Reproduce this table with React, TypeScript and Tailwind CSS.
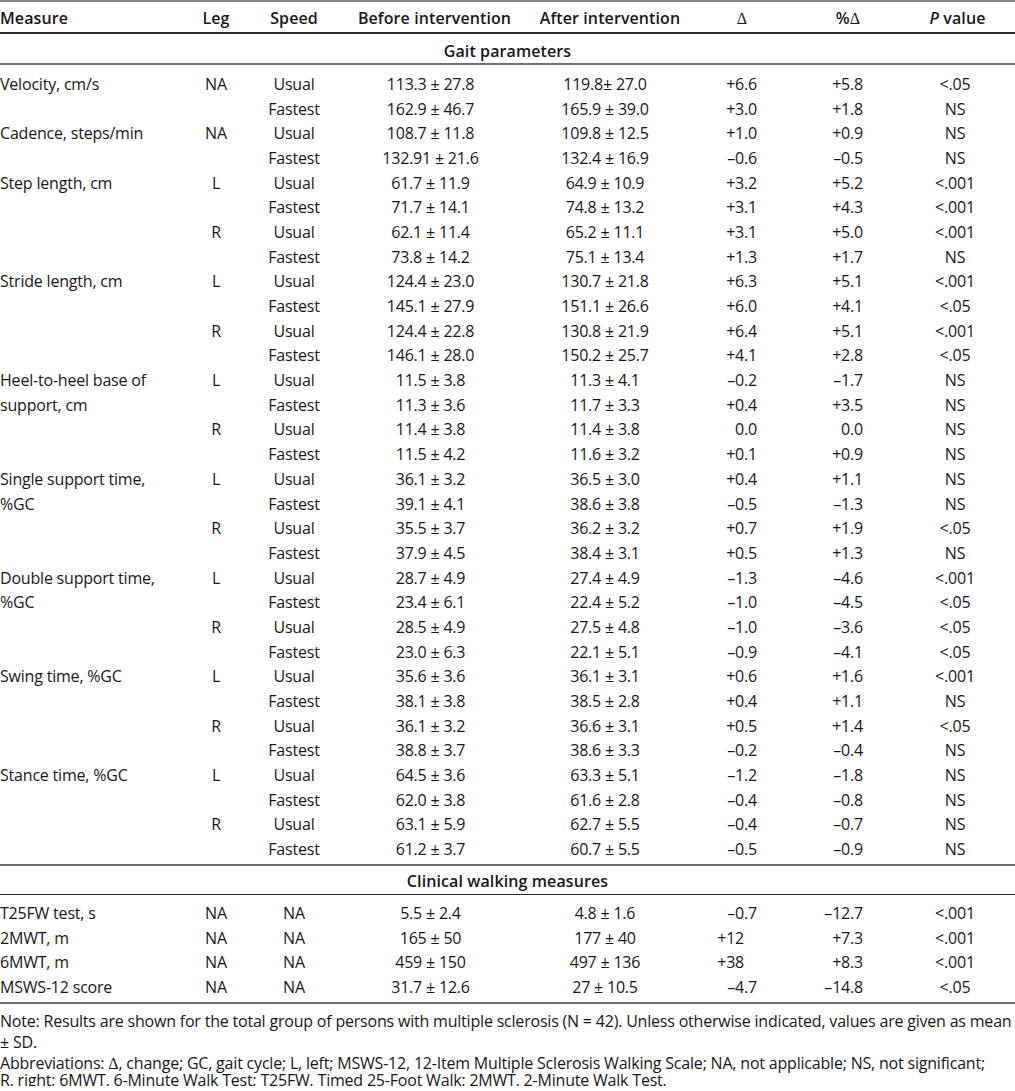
type Row = {
  label?: string
  leg?: string
  speed: string
  before: string
  after: string
  delta: string
  pct: string
  p: string
}

const GAIT: Row[] = [
  { label: 'Velocity, cm/s', leg: 'NA', speed: 'Usual', before: '113.3 ± 27.8', after: '119.8± 27.0', delta: '+6.6', pct: '+5.8', p: '<.05' },
  { speed: 'Fastest', before: '162.9 ± 46.7', after: '165.9 ± 39.0', delta: '+3.0', pct: '+1.8', p: 'NS' },
  { label: 'Cadence, steps/min', leg: 'NA', speed: 'Usual', before: '108.7 ± 11.8', after: '109.8 ± 12.5', delta: '+1.0', pct: '+0.9', p: 'NS' },
  { speed: 'Fastest', before: '132.91 ± 21.6', after: '132.4 ± 16.9', delta: '–0.6', pct: '–0.5', p: 'NS' },
  { label: 'Step length, cm', leg: 'L', speed: 'Usual', before: '61.7 ± 11.9', after: '64.9 ± 10.9', delta: '+3.2', pct: '+5.2', p: '<.001' },
  { speed: 'Fastest', before: '71.7 ± 14.1', after: '74.8 ± 13.2', delta: '+3.1', pct: '+4.3', p: '<.001' },
  { leg: 'R', speed: 'Usual', before: '62.1 ± 11.4', after: '65.2 ± 11.1', delta: '+3.1', pct: '+5.0', p: '<.001' },
  { speed: 'Fastest', before: '73.8 ± 14.2', after: '75.1 ± 13.4', delta: '+1.3', pct: '+1.7', p: 'NS' },
  { label: 'Stride length, cm', leg: 'L', speed: 'Usual', before: '124.4 ± 23.0', after: '130.7 ± 21.8', delta: '+6.3', pct: '+5.1', p: '<.001' },
  { speed: 'Fastest', before: '145.1 ± 27.9', after: '151.1 ± 26.6', delta: '+6.0', pct: '+4.1', p: '<.05' },
  { leg: 'R', speed: 'Usual', before: '124.4 ± 22.8', after: '130.8 ± 21.9', delta: '+6.4', pct: '+5.1', p: '<.001' },
  { speed: 'Fastest', before: '146.1 ± 28.0', after: '150.2 ± 25.7', delta: '+4.1', pct: '+2.8', p: '<.05' },
  { label: 'Heel-to-heel base of', leg: 'L', speed: 'Usual', before: '11.5 ± 3.8', after: '11.3 ± 4.1', delta: '–0.2', pct: '–1.7', p: 'NS' },
  { label: 'support, cm', speed: 'Fastest', before: '11.3 ± 3.6', after: '11.7 ± 3.3', delta: '+0.4', pct: '+3.5', p: 'NS' },
  { leg: 'R', speed: 'Usual', before: '11.4 ± 3.8', after: '11.4 ± 3.8', delta: '0.0', pct: '0.0', p: 'NS' },
  { speed: 'Fastest', before: '11.5 ± 4.2', after: '11.6 ± 3.2', delta: '+0.1', pct: '+0.9', p: 'NS' },
  { label: 'Single support time,', leg: 'L', speed: 'Usual', before: '36.1 ± 3.2', after: '36.5 ± 3.0', delta: '+0.4', pct: '+1.1', p: 'NS' },
  { label: '%GC', speed: 'Fastest', before: '39.1 ± 4.1', after: '38.6 ± 3.8', delta: '–0.5', pct: '–1.3', p: 'NS' },
  { leg: 'R', speed: 'Usual', before: '35.5 ± 3.7', after: '36.2 ± 3.2', delta: '+0.7', pct: '+1.9', p: '<.05' },
  { speed: 'Fastest', before: '37.9 ± 4.5', after: '38.4 ± 3.1', delta: '+0.5', pct: '+1.3', p: 'NS' },
  { label: 'Double support time,', leg: 'L', speed: 'Usual', before: '28.7 ± 4.9', after: '27.4 ± 4.9', delta: '–1.3', pct: '–4.6', p: '<.001' },
  { label: '%GC', speed: 'Fastest', before: '23.4 ± 6.1', after: '22.4 ± 5.2', delta: '–1.0', pct: '–4.5', p: '<.05' },
  { leg: 'R', speed: 'Usual', before: '28.5 ± 4.9', after: '27.5 ± 4.8', delta: '–1.0', pct: '–3.6', p: '<.05' },
  { speed: 'Fastest', before: '23.0 ± 6.3', after: '22.1 ± 5.1', delta: '–0.9', pct: '–4.1', p: '<.05' },
  { label: 'Swing time, %GC', leg: 'L', speed: 'Usual', before: '35.6 ± 3.6', after: '36.1 ± 3.1', delta: '+0.6', pct: '+1.6', p: '<.001' },
  { speed: 'Fastest', before: '38.1 ± 3.8', after: '38.5 ± 2.8', delta: '+0.4', pct: '+1.1', p: 'NS' },
  { leg: 'R', speed: 'Usual', before: '36.1 ± 3.2', after: '36.6 ± 3.1', delta: '+0.5', pct: '+1.4', p: '<.05' },
  { speed: 'Fastest', before: '38.8 ± 3.7', after: '38.6 ± 3.3', delta: '–0.2', pct: '–0.4', p: 'NS' },
  { label: 'Stance time, %GC', leg: 'L', speed: 'Usual', before: '64.5 ± 3.6', after: '63.3 ± 5.1', delta: '–1.2', pct: '–1.8', p: 'NS' },
  { speed: 'Fastest', before: '62.0 ± 3.8', after: '61.6 ± 2.8', delta: '–0.4', pct: '–0.8', p: 'NS' },
  { leg: 'R', speed: 'Usual', before: '63.1 ± 5.9', after: '62.7 ± 5.5', delta: '–0.4', pct: '–0.7', p: 'NS' },
  { speed: 'Fastest', before: '61.2 ± 3.7', after: '60.7 ± 5.5', delta: '–0.5', pct: '–0.9', p: 'NS' },
]

const CLINICAL: Row[] = [
  { label: 'T25FW test, s', leg: 'NA', speed: 'NA', before: '5.5 ± 2.4', after: '4.8 ± 1.6', delta: '–0.7', pct: '–12.7', p: '<.001' },
  { label: '2MWT, m', leg: 'NA', speed: 'NA', before: '165 ± 50', after: '177 ± 40', delta: '+12', pct: '+7.3', p: '<.001' },
  { label: '6MWT, m', leg: 'NA', speed: 'NA', before: '459 ± 150', after: '497 ± 136', delta: '+38', pct: '+8.3', p: '<.001' },
  { label: 'MSWS-12 score', leg: 'NA', speed: 'NA', before: '31.7 ± 12.6', after: '27 ± 10.5', delta: '–4.7', pct: '–14.8', p: '<.05' },
]

const COLS = 'grid grid-cols-[185px_62px_94px_179px_170px_110px_100px_115px]'

function Delta() {
  return <span className="font-['Liberation_Serif'] font-normal">Δ</span>
}

function DataRow({ r }: { r: Row }) {
  // integers get an invisible decimal so they line up on the point
  const whole = !r.delta.includes('.')
  return (
    <div className={`${COLS} h-[24.7px] items-center whitespace-nowrap`}>
      <div>{r.label ?? ''}</div>
      <div className="text-center">{r.leg ?? ''}</div>
      <div className="text-center">{r.speed}</div>
      <div className="text-center">{r.before}</div>
      <div className="text-center">{r.after}</div>
      <div className="pr-[43px] text-right">
        {r.delta}
        {whole && <span className="invisible">.0</span>}
      </div>
      <div className="pr-[37px] text-right">{r.pct}</div>
      <div className="pr-[5px] text-center">{r.p}</div>
    </div>
  )
}

export default function App() {
  return (
    <div className="w-[1015px] bg-white font-['Open_Sans'] text-[16px] leading-none tracking-[-0.2px] text-[#1a1718]">
      <div className="h-[2px] bg-[#858585]" />
      <div className={`${COLS} h-[30px] items-center pt-[2px] font-semibold tracking-[0.1px] whitespace-nowrap`}>
        <div>Measure</div>
        <div className="text-center">Leg</div>
        <div className="text-center">Speed</div>
        <div className="pl-[8px] text-center">Before intervention</div>
        <div className="pl-[10px] text-center">After intervention</div>
        <div className="pr-[6px] text-center">
          <Delta />
        </div>
        <div className="pr-[4px] text-center">
          %<Delta />
        </div>
        <div className="text-center">
          <span className="italic">P</span> value
        </div>
      </div>
      <div className="h-[1.5px] bg-[#2a2a2a]" />
      <div className="flex h-[29px] items-center justify-center pt-[5px] font-semibold tracking-[0.1px]">Gait parameters</div>
      <div className="h-[2px] bg-[#6f6f6f]" />
      <div className="pt-[7px] pb-[2.5px]">
        {GAIT.map((r, i) => (
          <DataRow key={i} r={r} />
        ))}
      </div>
      <div className="h-[2px] bg-[#6f6f6f]" />
      <div className="flex h-[27.5px] items-center justify-center pt-[3px] font-semibold tracking-[0.1px]">
        Clinical walking measures
      </div>
      <div className="h-[1.5px] bg-[#2a2a2a]" />
      <div className="pt-[5.5px] pb-[3px]">
        {CLINICAL.map((r, i) => (
          <DataRow key={i} r={r} />
        ))}
      </div>
      <div className="h-[1.5px] bg-[#6f6f6f]" />
      <div className="pt-[7px] whitespace-nowrap">
        <p className="leading-[21px]">
          Note: Results are shown for the total group of persons with multiple sclerosis (N = 42). Unless otherwise indicated, values are given as mean
          <br />± SD.
        </p>
        <p>
          <span className="block leading-[21px]">
            Abbreviations: <Delta />, change; GC, gait cycle; L, left; MSWS-12, 12-Item Multiple Sclerosis Walking Scale; NA, not applicable; NS, not
            significant;
          </span>
          <span className="block leading-[12px]">
            R, right; 6MWT, 6-Minute Walk Test; T25FW, Timed 25-Foot Walk; 2MWT, 2-Minute Walk Test.
          </span>
        </p>
      </div>
    </div>
  )
}
